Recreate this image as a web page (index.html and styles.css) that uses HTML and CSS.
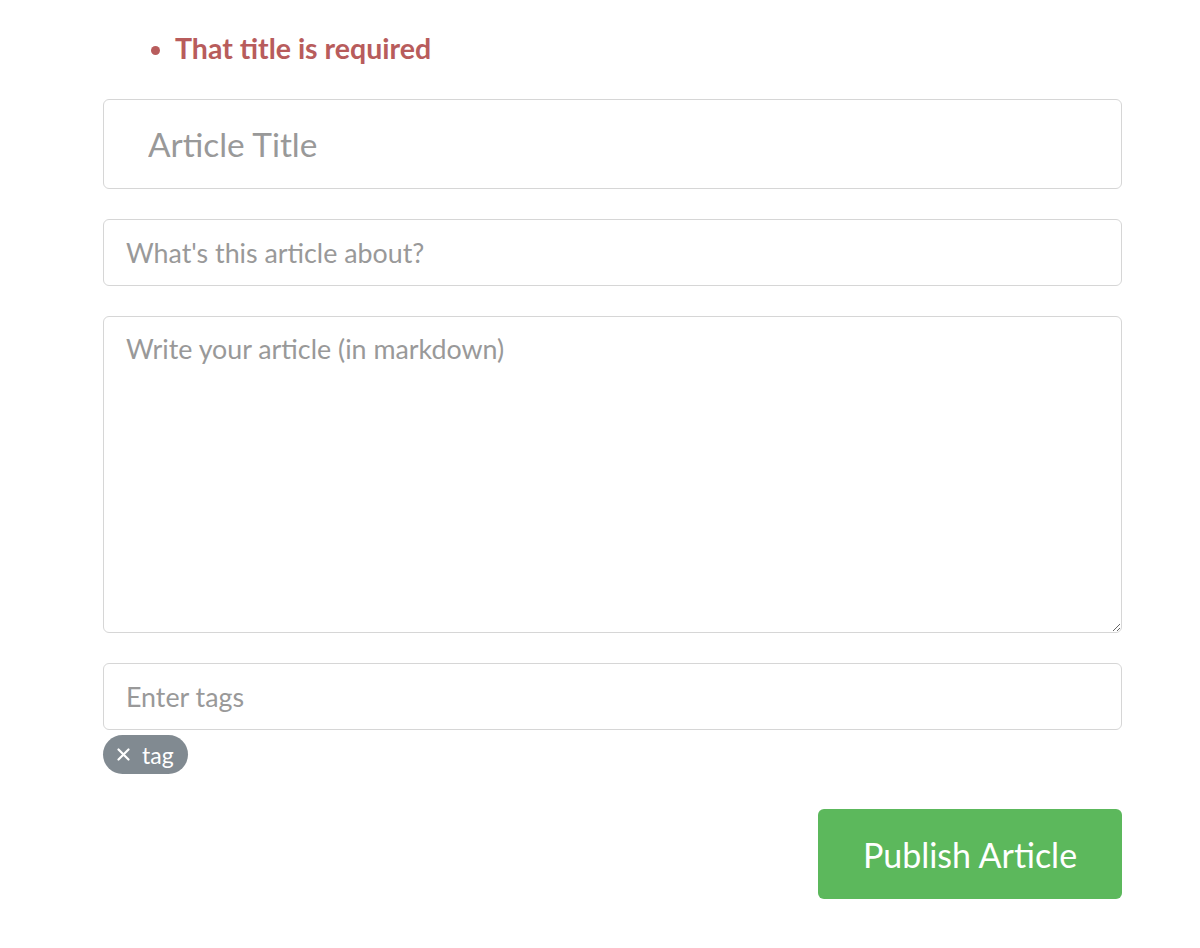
FILE: index.html
```html
<!DOCTYPE html>
<html lang="en">
<head>
<meta charset="utf-8">
<title>Editor</title>
<link rel="stylesheet" href="styles.css">
</head>
<body>
<div class="editor">
  <ul class="error-messages">
    <li>That title is required</li>
  </ul>
  <form class="article-form">
    <input class="field field-lg" type="text" placeholder="Article Title">
    <input class="field" type="text" placeholder="What's this article about?">
    <textarea class="field field-area" placeholder="Write your article (in markdown)"></textarea>
    <div class="tags-group">
      <input class="field" type="text" placeholder="Enter tags">
      <div class="tag-list">
        <span class="tag-pill">
          <svg class="tag-remove" viewBox="0 0 13 13" width="13" height="13" aria-hidden="true">
            <path d="M1.5 1.5 L11.5 11.5 M11.5 1.5 L1.5 11.5" stroke="#fff" stroke-width="2.2" stroke-linecap="round" fill="none"/>
          </svg>tag
        </span>
      </div>
    </div>
    <div class="actions">
      <button class="btn-publish" type="button">Publish Article</button>
    </div>
  </form>
</div>
</body>
</html>
```
FILE: styles.css
```css
* { box-sizing: border-box; }

html, body {
  margin: 0;
  background: #fff;
}

body {
  font-family: Lato, "Source Sans Pro", "Open Sans", sans-serif;
}

.editor {
  width: 1019px;
  margin-left: 103px;
  padding-top: 29px;
}

.error-messages {
  margin: 0 0 32px;
  padding-left: 72px;
  color: #b85c5c;
  font-weight: 700;
  font-size: 28.5px;
  line-height: 38px;
}

.error-messages li::marker {
  font-size: 26px;
}

.article-form {
  display: flex;
  flex-direction: column;
}

.field {
  display: block;
  width: 100%;
  height: 67px;
  margin: 0 0 30px;
  padding: 0 22px;
  border: 1px solid #d6d6d6;
  border-radius: 6px;
  background: #fff;
  font-family: inherit;
  font-size: 26.8px;
  color: #55595c;
  outline: none;
}

.field::placeholder {
  color: #999;
}

.field-lg {
  height: 90px;
  padding: 0 44px;
  font-size: 33.4px;
}

.field-area {
  height: 317px;
  padding: 14px 22px;
  line-height: 36px;
  resize: vertical;
}

.tags-group .field {
  margin-bottom: 5px;
}

.tag-list {
  display: flex;
}

.tag-pill {
  display: inline-flex;
  align-items: center;
  height: 39px;
  padding: 0 14px 0 14px;
  border-radius: 20px;
  background: #818a91;
  color: #fff;
  font-size: 23px;
}

.tag-remove {
  display: block;
  margin-right: 12px;
}

.actions {
  display: flex;
  justify-content: flex-end;
  margin-top: 35px;
}

.btn-publish {
  width: 304px;
  height: 90px;
  border: none;
  border-radius: 6px;
  background: #5cb85c;
  color: #fff;
  font-family: inherit;
  font-size: 34px;
  cursor: pointer;
}
```
